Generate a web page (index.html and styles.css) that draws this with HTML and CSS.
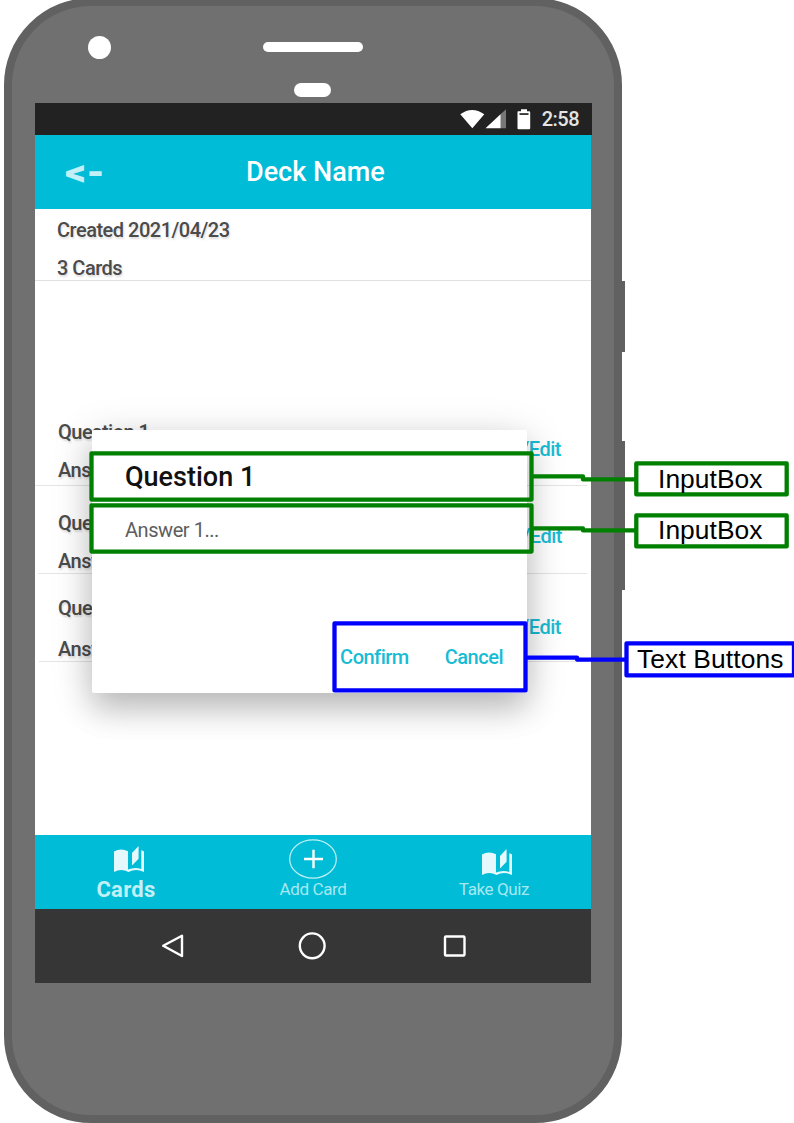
FILE: index.html
```html
<!DOCTYPE html>
<html lang="en">
<head>
<meta charset="utf-8">
<title>Deck Name</title>
<link rel="stylesheet" href="styles.css">
</head>
<body>
<main class="stage">
  <div class="phone">
    <i class="side-button power"></i><i class="side-button volume"></i>
    <div class="hardware"><i class="camera"></i><i class="speaker"></i><i class="sensor"></i></div>
    <div class="screen">
      <div class="status">
        <svg class="status-icons" width="74" height="24" viewBox="0 0 74 24"><path fill="#fff" d="M.3 6.3Q12-2.3 24.3 6.3L12.3 20.3zM25.5 20.3 40.8 6V20.3z"/><path fill="#777" d="M40.8 6 46 1.2V20.3h-5.2z"/><path fill="#fff" d="M58 3.2h3V1.2h6v2h2.2q1 0 1 1V20.3q0 1-1 1H58.5q-1 0-1-1V4.2q0-1 .5-1z"/><path fill="#222" d="M59.5 5.2h9v1.7h-9z"/></svg>
        <span class="time">2:58</span>
      </div>
      <header class="header"><span class="back">&lt;-</span><h1 class="deck-title">Deck Name</h1></header>
      <div class="content">
        <section class="info"><p>Created 2021/04/23</p><p>3 Cards</p></section>
        <section class="cards">
          <article class="card first"><div class="card-text"><p>Question 1</p><p>Ans</p></div><a class="edit">/Edit</a></article>
          <article class="card second"><div class="card-text"><p>Que</p><p>Answ</p></div><a class="edit">/Edit</a></article>
          <article class="card third"><div class="card-text"><p>Que</p><p>Answ</p></div><a class="edit">/Edit</a></article>
        </section>
      </div>
      <nav class="tabs">
        <div class="tab active"><svg class="book" width="30" height="27" viewBox="0 0 30 27"><path d="M0 5.5Q7 1.5 14 5.3V23.6Q20.5 20.5 27.3 23V4.3Q29 4.8 30 5.6V26Q22 22 14.5 26Q7 22 0 26zM18 7 24.6 0V12.8L18 19.4z"/></svg><span>Cards</span></div>
        <div class="tab add"><svg class="plus" width="48" height="40" viewBox="0 0 48 40"><ellipse cx="24" cy="20" rx="23.3" ry="19.2" fill="none" stroke="#c3f0f6" stroke-width="1.2"/><path d="M15 20h19M24.5 10.7v18.6" stroke="#fff" stroke-width="2.4"/></svg><span>Add Card</span></div>
        <div class="tab quiz"><svg class="book" width="30" height="27" viewBox="0 0 30 27"><path d="M0 5.5Q7 1.5 14 5.3V23.6Q20.5 20.5 27.3 23V4.3Q29 4.8 30 5.6V26Q22 22 14.5 26Q7 22 0 26zM18 7 24.6 0V12.8L18 19.4z"/></svg><span>Take Quiz</span></div>
      </nav>
      <div class="system-nav">
        <svg width="556" height="74" viewBox="35 909 556 74" fill="none" stroke="#fff" stroke-width="2.4" stroke-linejoin="round"><path d="M163.2 945.8 182 935.8V956z"/><circle cx="312.2" cy="945.8" r="12.4"/><rect x="445" y="936.5" width="19.5" height="19" rx="1"/></svg>
      </div>
    </div>
  </div>
  <div class="dialog">
    <h2 class="question">Question 1</h2>
    <p class="answer">Answer 1...</p>
    <div class="actions"><span class="confirm">Confirm</span><span class="cancel">Cancel</span></div>
  </div>
  <svg class="annotations" width="794" height="1123" viewBox="0 0 794 1123">
    <g class="green"><path d="M532 476.4h51v3h53M532 528.4h51v2h53"/><rect x="91.5" y="453.3" width="440" height="46.3"/><rect x="91.5" y="505.3" width="440" height="46.3"/><rect class="label" x="636.3" y="463.4" width="150.4" height="31"/><rect class="label" x="636.3" y="515.4" width="150.4" height="31"/></g>
    <g class="blue"><path d="M526 657.6h51v2h49"/><rect x="334.5" y="623.4" width="191" height="67"/><rect class="label" x="626.5" y="643.4" width="167.5" height="32"/></g>
    <text x="658" y="488" textLength="104.5">InputBox</text><text x="658" y="539" textLength="104.5">InputBox</text><text x="637" y="668" textLength="146.5">Text Buttons</text>
  </svg>
</main>
</body>
</html>
```
FILE: styles.css
```css
* { box-sizing: border-box; }
body { margin: 0; overflow: hidden; background: #fff; font-family: Roboto, sans-serif; }
p, h1, h2 { margin: 0; font-weight: 500; }
.stage { position: relative; width: 794px; height: 1123px; overflow: hidden; }
.phone { position: relative; width: 618px; height: 1125px; margin: -2px 0 0 4px; padding: 97px 23px 0; background: #707070; border: 8px solid #616161; border-radius: 87px; }
.side-button { position: absolute; left: 609px; width: 4px; background: #616161; }
.power { top: 275px; height: 71px; }
.volume { top: 435px; height: 149px; }
.hardware i { position: absolute; background: #fff; }
.camera { left: 76px; top: 30px; width: 23px; height: 23px; border-radius: 50%; }
.speaker { left: 251px; top: 36px; width: 100px; height: 10px; border-radius: 5px; }
.sensor { left: 282px; top: 77px; width: 37px; height: 14px; border-radius: 7px; }
.screen { width: 556px; height: 880px; }
.status { display: flex; align-items: center; justify-content: flex-end; width: 557px; height: 32px; padding-right: 13px; background: #222; color: #e4e4e4; font-size: 20px; font-weight: 500; letter-spacing: -.5px; }
.status-icons { margin-right: 8px; position: relative; top: 1px; }
.header { display: flex; align-items: center; height: 74px; padding-left: 30px; background: #00bcd7; }
.back { width: 181px; color: #c3f0f6; font-size: 37px; font-weight: 900; transform: scaleX(1.12); transform-origin: left; }
.deck-title { color: #fff; font-size: 27px; }
.content { height: 626px; background: #fff; color: #4b4b4b; font-size: 20px; letter-spacing: -.5px; text-shadow: 1px 2px 2px #0002; }
.info { height: 72px; padding: 2px 0 0 22px; line-height: 38px; border-bottom: 1px solid #e0e0e0; }
.cards { padding-top: 111px; }
.card { display: flex; justify-content: space-between; border-bottom: 1px solid #e4e4e4; line-height: 24px; }
.card-text { display: flex; flex-direction: column; gap: 14px; }
.first { height: 94px; margin-right: 4px; padding: 28px 26px 0 23px; }
.second { height: 88px; margin: 0 4px 0 3px; padding: 25px 25px 0 20px; }
.third { height: 88px; margin: 0 4px 0 4px; padding: 22px 26px 0 19px; }
.third .card-text { gap: 17px; }
.edit { padding-top: 17px; color: #18bcd5; font-weight: 500; text-shadow: none; }
.second .edit { padding-top: 13px; }
.third .edit { padding-top: 19px; }
.tabs { display: grid; grid-template-columns: 182px 192px 170px; height: 74px; background: #00bcd7; color: #a6e8f1; font-size: 17px; letter-spacing: -.38px; }
.tab { display: flex; flex-direction: column; align-items: center; line-height: 20px; }
.book { margin-left: 6px; fill: #e5f9fc; }
.active { padding-top: 11px; color: #c3f0f6; font-size: 22px; font-weight: 700; letter-spacing: .3px; }
.active span { margin-top: 7px; }
.add { padding-top: 4px; }
.add span { margin-top: 0; }
.quiz { padding-top: 14px; }
.quiz span { margin-top: 3px; }
.system-nav { height: 74px; background: #363636; }
.dialog { position: absolute; left: 92px; top: 430px; width: 435px; height: 263px; padding: 31px 24px 0 33px; background: #fff; border-radius: 2px; box-shadow: 0 17px 30px #0000002b, 0 8px 42px #0000002b; }
.question { color: #111; font-size: 27px; line-height: 32px; }
.answer { margin-top: 25px; color: #5d5d5d; font-size: 20px; font-weight: 400; letter-spacing: -.45px; line-height: 24px; }
.actions { display: flex; justify-content: flex-end; gap: 36px; margin-top: 103px; color: #18bcd5; font-size: 20px; font-weight: 500; letter-spacing: -.5px; line-height: 25px; }
.annotations { position: absolute; left: 0; top: 0; }
.annotations rect, .annotations path { fill: none; stroke-width: 4.3; stroke-linejoin: round; }
.green { stroke: #008000; }
.blue { stroke: #00f; }
.annotations .label { fill: #fff; }
.annotations text { fill: #000; font: 26.4px "Liberation Sans", sans-serif; }
```
